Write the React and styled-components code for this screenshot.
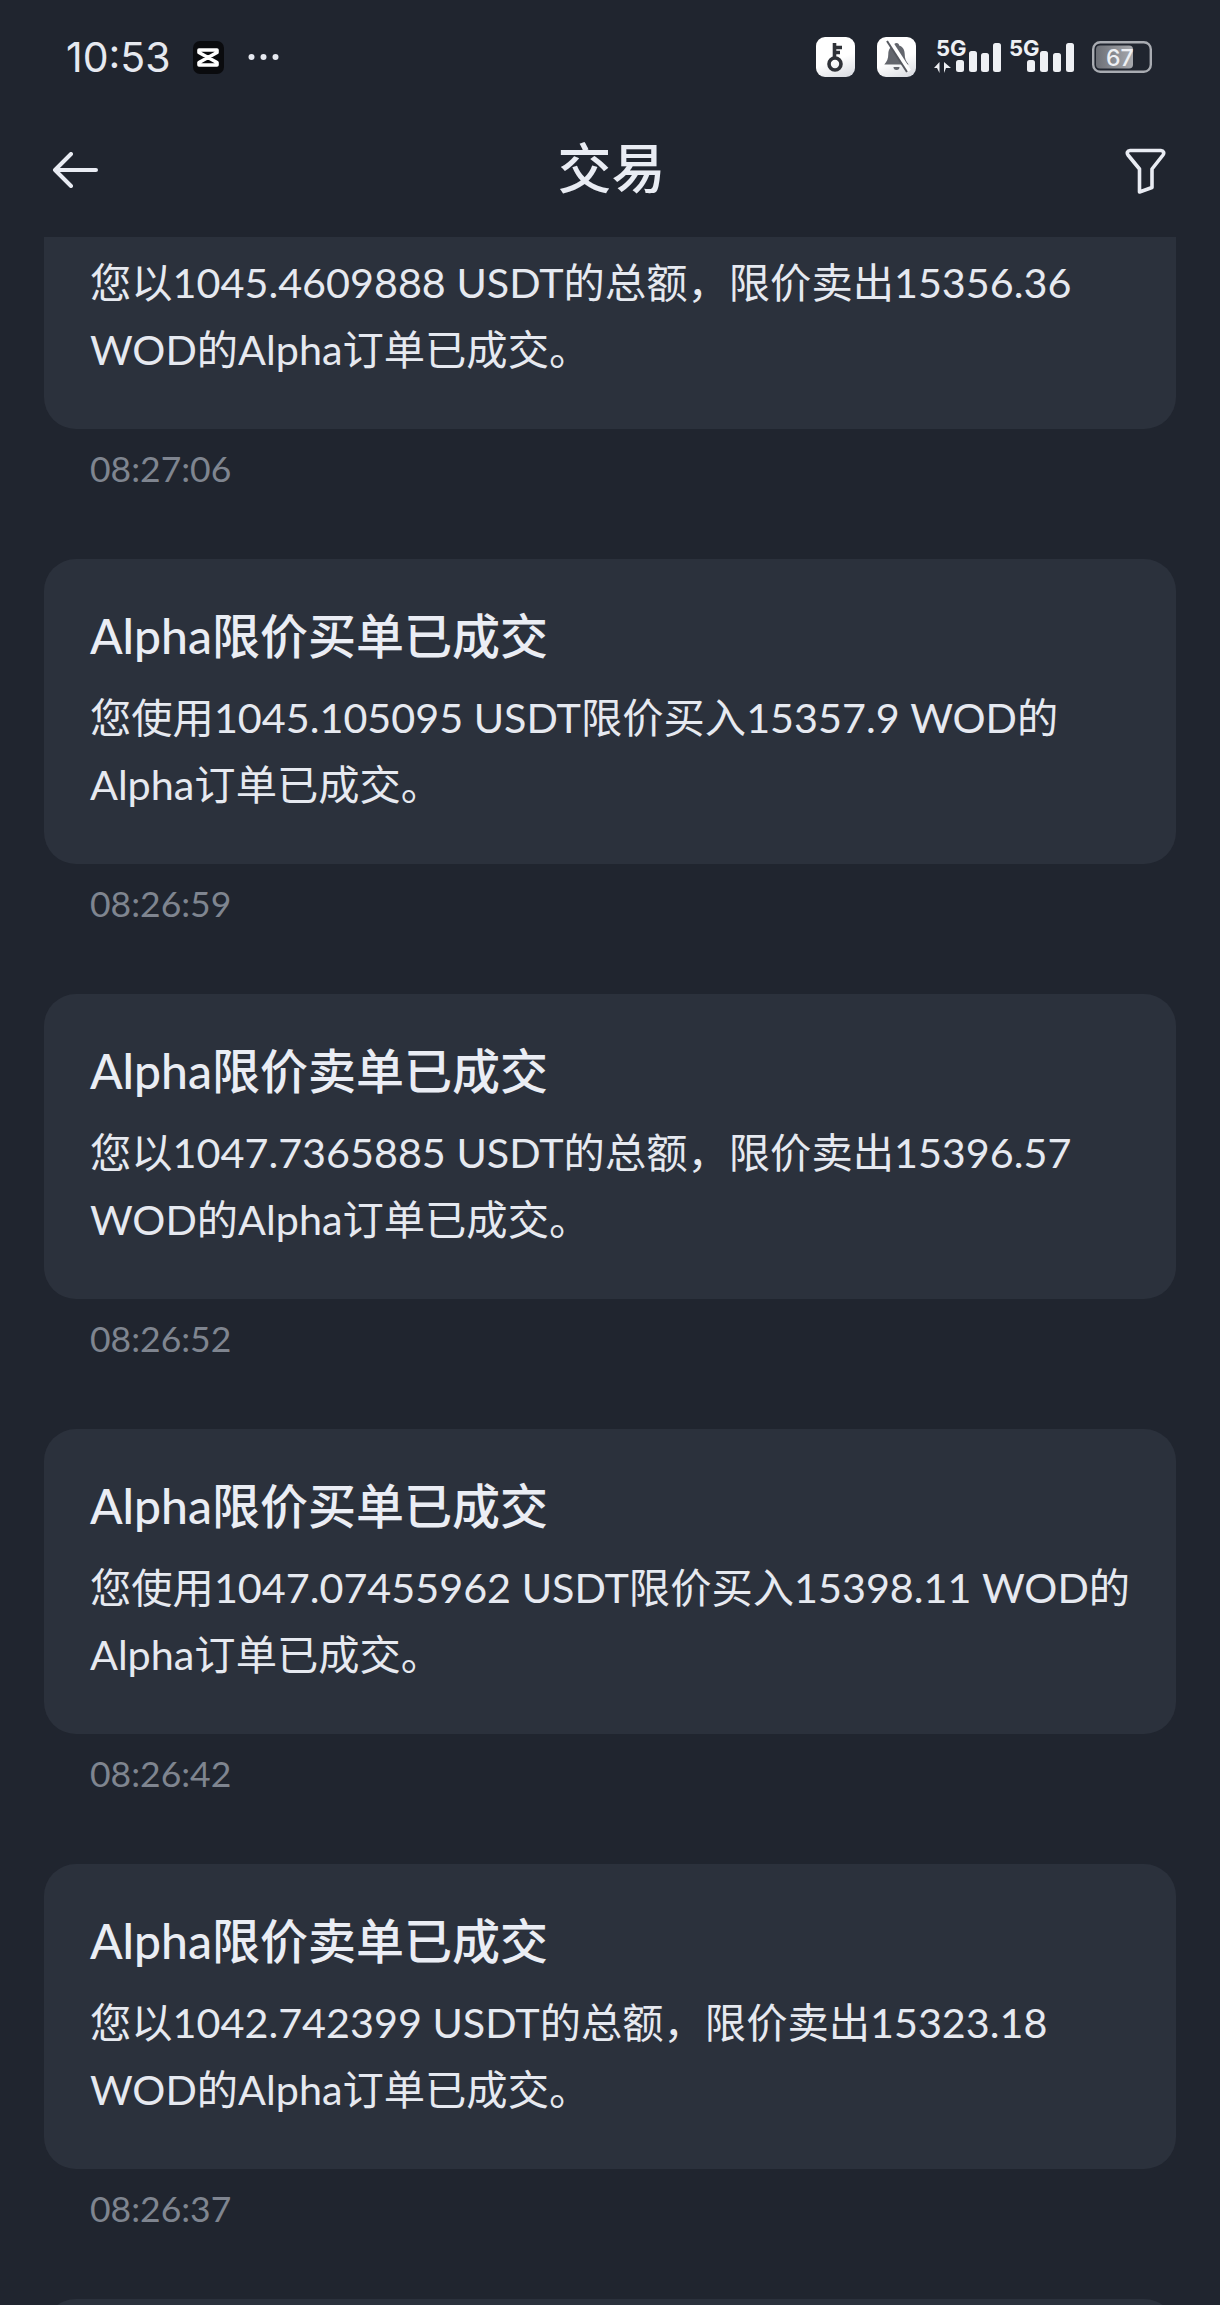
import React from "react";
import styled, { createGlobalStyle } from "styled-components";

const Global = createGlobalStyle`
  html, body { margin: 0; padding: 0; background: #20252f; }
  body { width: 1220px; height: 2305px; overflow: hidden; font-family: Lato, "Noto Sans CJK SC", sans-serif; }
`;
const Page = styled.div`
  width: 1220px; height: 2305px; overflow: hidden; background: #20252f; display: flex; flex-direction: column;
`;
const StatusBar = styled.div`
  flex: none; height: 116px; box-sizing: border-box; padding: 0 68px 2px 66px; display: flex; align-items: center; justify-content: space-between; color: #e6e9f0;
`;
const StatusLeft = styled.div`display: flex; align-items: center; gap: 22px;`;
const Clock = styled.span`font-family: Inter, sans-serif; font-size: 41px; font-weight: 400; line-height: 1;`;
const StatusRight = styled.div`display: flex; align-items: center; gap: 18px;`;
const Tiles = styled.div`display: flex; align-items: center; gap: 22px;`;
const Signals = styled.div`display: flex; align-items: center; gap: 8px;`;
const Tile = styled.div`
  width: 39px; height: 40px; border-radius: 9px; background: linear-gradient(160deg, #ffffff 55%, #d5d8de 100%);
  display: flex; align-items: center; justify-content: center;
`;
const AppBadge = styled.div`
  width: 31px; height: 33px; border-radius: 7px; background: #0a0b0e; display: flex; align-items: center; justify-content: center;
`;
const Header = styled.header`
  flex: none; height: 121px; box-sizing: border-box; padding: 0 54px 14px 52px; display: flex; align-items: center; justify-content: space-between;
`;
const Title = styled.h1`margin: 0; font-family: Inter, "Noto Sans CJK SC", sans-serif; font-size: 54px; font-weight: 500; color: #e9ecf3; line-height: 1;`;
const List = styled.div`flex: none; display: flex; flex-direction: column; padding: 0 44px;`;
const Card = styled.div`
  background: #2b313c; box-sizing: border-box; padding: ${p => p.$cut ? "12px" : "48px"} 30px 46px 46px;
  border-radius: ${p => p.$cut ? "0 0 32px 32px" : "32px"};
`;
const TailCard = styled.div`background: #2b313c; height: 40px; border-radius: 32px 32px 0 0;`;
const CardTitle = styled.div`font-size: 48px; font-weight: 500; color: #eaedf4; line-height: 58px; margin-bottom: 19px;`;
const Body = styled.div`font-size: 41.3px; color: #e6e9f0; line-height: 67px; white-space: nowrap;`;
const Time = styled.div`font-size: 35.5px; color: #7f8590; padding-left: 46px; line-height: 40px; margin: 20px 0 70px;`;

const items = [
  ["Alpha限价买单已成交", "您使用1045.105095 USDT限价买入15357.9 WOD的", "Alpha订单已成交。", "08:26:59"],
  ["Alpha限价卖单已成交", "您以1047.7365885 USDT的总额，限价卖出15396.57", "WOD的Alpha订单已成交。", "08:26:52"],
  ["Alpha限价买单已成交", "您使用1047.07455962 USDT限价买入15398.11 WOD的", "Alpha订单已成交。", "08:26:42"],
  ["Alpha限价卖单已成交", "您以1042.742399 USDT的总额，限价卖出15323.18", "WOD的Alpha订单已成交。", "08:26:37"],
];

const CapCut = () => (
  <svg width="24" height="21" viewBox="0 0 24 21" fill="none" stroke="#fff" strokeWidth="3.600" strokeLinejoin="round">
    <path d="M3 3 H21 V5.500 L3 15.500 V18 H21 V15.500 L3 5.500 Z" />
  </svg>
);
const Dots = () => (
  <svg width="33" height="8" viewBox="0 0 33 8" fill="#e6e9f0">
    <circle cx="5.500" cy="4" r="3" /><circle cx="17.500" cy="4" r="3" /><circle cx="29.500" cy="4" r="3" />
  </svg>
);
const Key = () => (
  <svg width="39" height="40" viewBox="0 0 39 40" fill="none" stroke="#2f3238" strokeWidth="3.600">
    <circle cx="19" cy="27" r="6" />
    <path d="M18.500 21 V6 M18.500 10.500 H26 M18.500 15.500 H24" />
  </svg>
);
const BellOff = () => (
  <svg width="39" height="40" viewBox="0 0 39 40">
    <path d="M19.500 6 c1.600 0 2.600 1 2.600 2.400 c4 1.200 5.600 4.600 5.600 8.600 c0 4.600 1.400 7.600 4 10.600 H7.300 c2.600-3 4-6 4-10.600 c0-4 1.600-7.400 5.600-8.600 C16.900 7 17.900 6 19.500 6 Z" fill="#63666d" />
    <path d="M16.500 30 a3 3 0 0 0 6 0 Z" fill="#63666d" />
    <path d="M12 3 L32 34" stroke="#fff" strokeWidth="4.500" />
    <path d="M10 4 L30 35" stroke="#55585f" strokeWidth="2" />
  </svg>
);
const Bars = ({ x }) => (
  <g fill="#eef0f4">
    <rect x={x[0]} y="20" width="8" height="12" rx="2.500" />
    <rect x={x[1]} y="11" width="8" height="21" rx="2.500" />
    <rect x={x[2]} y="13" width="8" height="19" rx="2.500" />
    <rect x={x[3]} y="3" width="8" height="29" rx="2.500" />
  </g>
);
const SignalData = () => (
  <svg width="67" height="44" viewBox="0 -5 67 44">
    <text x="2" y="16" fontFamily="Inter, sans-serif" fontSize="22" fontWeight="700" fill="#eef0f4">5G</text>
    <Bars x={[22, 35, 47, 59]} />
    <path d="M0 28 H5.500 V22 Z M5.500 28 V33 L3 28 Z M10 22 V33 L12 28 H17 L10 22 Z" fill="#eef0f4" />
  </svg>
);
const Signal = () => (
  <svg width="65" height="44" viewBox="0 -5 65 44">
    <text x="0" y="16" fontFamily="Inter, sans-serif" fontSize="22" fontWeight="700" fill="#eef0f4">5G</text>
    <Bars x={[18, 31, 44, 57]} />
  </svg>
);
const Battery = () => (
  <svg width="60" height="32" viewBox="0 0 60 32">
    <defs>
      <linearGradient id="batteryFill" x1="0" x2="1" y1="0" y2="0">
        <stop offset="0" stopColor="#6d7077" />
        <stop offset="1" stopColor="#a6a8ad" />
      </linearGradient>
    </defs>
    <rect x="1.200" y="1.200" width="57.600" height="29.600" rx="7" fill="none" stroke="#a9acb2" strokeWidth="2.400" />
    <rect x="4" y="4.500" width="37" height="23" rx="4" fill="url(#batteryFill)" />
    <text x="14" y="25" fontFamily="Inter, sans-serif" fontSize="23" fontWeight="500" fill="#eef0f4">67</text>
  </svg>
);
const Back = () => (
  <svg width="46" height="36" viewBox="0 0 46 36" fill="none" stroke="#e9ecf3" strokeWidth="4" strokeLinecap="round" strokeLinejoin="round">
    <path d="M44 18 H3 M19 2 L3 18 L19 34" />
  </svg>
);
const Funnel = () => (
  <svg width="41" height="48" viewBox="0 -2 41 48" fill="none" stroke="#e9ecf3" strokeWidth="3.600" strokeLinejoin="round">
    <path d="M5 2.500 H36 C38.500 2.500 39.500 5 38 7 L27 21 V39.500 L14.500 44 V21 L3 7 C1.500 5 2.500 2.500 5 2.500 Z" />
  </svg>
);

export default function App() {
  return (
    <Page>
      <Global />
      <StatusBar>
        <StatusLeft>
          <Clock>10:53</Clock>
          <AppBadge><CapCut /></AppBadge>
          <Dots />
        </StatusLeft>
        <StatusRight>
          <Tiles>
            <Tile><Key /></Tile>
            <Tile><BellOff /></Tile>
          </Tiles>
          <Signals>
            <SignalData />
            <Signal />
          </Signals>
          <Battery />
        </StatusRight>
      </StatusBar>
      <Header>
        <Back />
        <Title>交易</Title>
        <Funnel />
      </Header>
      <List>
        <Card $cut>
          <Body>您以1045.4609888 USDT的总额，限价卖出15356.36<br />WOD的Alpha订单已成交。</Body>
        </Card>
        <Time>08:27:06</Time>
        {items.map(([t, a, b, c]) => (
          <React.Fragment key={c}>
            <Card>
              <CardTitle>{t}</CardTitle>
              <Body>{a}<br />{b}</Body>
            </Card>
            <Time>{c}</Time>
          </React.Fragment>
        ))}
        <TailCard />
      </List>
    </Page>
  );
}
